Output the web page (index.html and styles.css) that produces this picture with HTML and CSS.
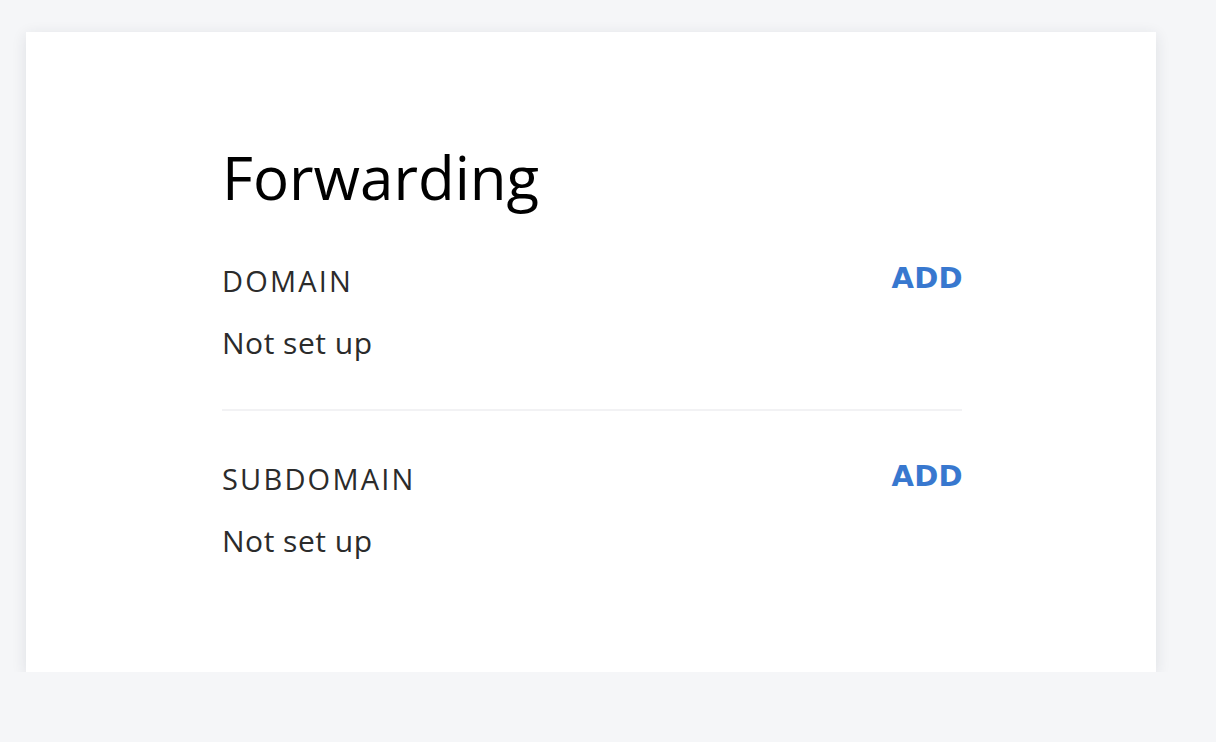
FILE: index.html
```html
<!DOCTYPE html>
<html lang="en">
<head>
<meta charset="utf-8">
<title>Forwarding</title>
<link rel="stylesheet" href="styles.css">
</head>
<body>
<main class="page">
  <section class="card">
    <div class="content">
      <h1 class="title">Forwarding</h1>
      <div class="section section-first">
        <div class="row">
          <span class="label">DOMAIN</span>
          <a class="add" href="#">ADD</a>
        </div>
        <p class="value">Not set up</p>
      </div>
      <div class="divider"></div>
      <div class="section">
        <div class="row">
          <span class="label">SUBDOMAIN</span>
          <a class="add" href="#">ADD</a>
        </div>
        <p class="value">Not set up</p>
      </div>
    </div>
  </section>
</main>
</body>
</html>
```
FILE: styles.css
```css
html, body {
  margin: 0;
  padding: 0;
  background: #f5f6f8;
  font-family: "Open Sans", "DejaVu Sans", sans-serif;
}

.page {
  padding: 32px 0 0 26px;
}

.card {
  width: 1130px;
  height: 640px;
  box-sizing: border-box;
  background: #ffffff;
  box-shadow: 0 3px 14px rgba(40, 45, 60, 0.11);
  padding: 109px 0 0 196px;
}

.content {
  width: 740px;
}

.title {
  margin: 0;
  font-size: 60px;
  line-height: 72px;
  font-weight: 400;
  color: #000;
  letter-spacing: 0;
}

.section {
  padding-top: 50px;
  padding-bottom: 48px;
}

.section-first {
  padding-top: 50px;
}

.row {
  display: flex;
  justify-content: space-between;
  align-items: flex-start;
}

.label {
  font-size: 29px;
  line-height: 36px;
  color: #2b2b2b;
  letter-spacing: 2.2px;
}

.add {
  font-family: "DejaVu Sans", "Open Sans", sans-serif;
  font-size: 29px;
  line-height: 36px;
  font-weight: 700;
  color: #3878cf;
  text-decoration: none;
  letter-spacing: 0.3px;
  margin-top: -3px;
  margin-right: -1px;
}

.value {
  margin: 26px 0 0 0;
  font-size: 30px;
  line-height: 36px;
  color: #2b2b2b;
  letter-spacing: 0.5px;
}

.divider {
  height: 2px;
  background: #f2f2f4;
}
```
